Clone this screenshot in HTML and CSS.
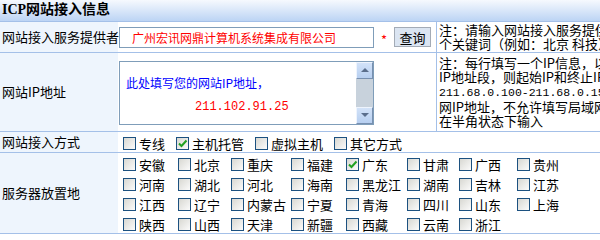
FILE: index.html
```html
<!DOCTYPE html>
<html lang="zh-CN">
<head>
    <meta charset="UTF-8">
    <title>ICP网站接入信息</title>
    <link rel="stylesheet" href="styles.css">
</head>
<body>
    <div class="panel">
        <div class="title">ICP网站接入信息</div>

        <div class="row row-provider">
            <div class="label">网站接入服务提供者</div>
            <div class="field">
                <div class="text-input">广州宏讯网鼎计算机系统集成有限公司</div>
                <span class="required">*</span>
                <button class="btn">查询</button>
            </div>
            <div class="note">
                <div>注：请输入网站接入服务提供者名称中的一</div>
                <div>个关键词（例如：北京 科技）进行查询</div>
            </div>
        </div>

        <div class="row row-ip">
            <div class="label">网站IP地址</div>
            <div class="field">
                <div class="textarea">
                    <div class="textarea-body">
                        <div class="hint">此处填写您的网站IP地址，</div>
                        <div class="ip">211.102.91.25</div>
                    </div>
                    <div class="scrollbar">
                        <div class="sb-btn"><span class="arrow up"></span></div>
                        <div class="sb-track"></div>
                        <div class="sb-btn"><span class="arrow down"></span></div>
                    </div>
                </div>
            </div>
            <div class="note">
                <div>注：每行填写一个IP信息，以回车分隔；如果是</div>
                <div>IP地址段，则起始IP和终止IP之间用“-”分隔</div>
                <div><span class="mono">211.68.0.100-211.68.0.150</span>；必须填写公</div>
                <div>网IP地址，不允许填写局域网IP地址；请</div>
                <div>在半角状态下输入</div>
            </div>
        </div>

        <div class="row row-mode">
            <div class="label">网站接入方式</div>
            <div class="field wide checks">
                <label class="ck"><span class="box"></span>专线</label>
                <label class="ck"><span class="box checked"><svg viewBox="0 0 11 11"><path d="M2 5.5 L4.5 8 L9.5 2.5"/></svg></span>主机托管</label>
                <label class="ck"><span class="box"></span>虚拟主机</label>
                <label class="ck"><span class="box"></span>其它方式</label>
            </div>
        </div>

        <div class="row row-area">
            <div class="label">服务器放置地</div>
            <div class="field wide">
                <div class="areas">
                    <label class="ck"><span class="box"></span>安徽</label>
                    <label class="ck"><span class="box"></span>北京</label>
                    <label class="ck"><span class="box"></span>重庆</label>
                    <label class="ck"><span class="box"></span>福建</label>
                    <label class="ck"><span class="box checked"><svg viewBox="0 0 11 11"><path d="M2 5.5 L4.5 8 L9.5 2.5"/></svg></span>广东</label>
                    <label class="ck"><span class="box"></span>甘肃</label>
                    <label class="ck"><span class="box"></span>广西</label>
                    <label class="ck"><span class="box"></span>贵州</label>

                    <label class="ck"><span class="box"></span>河南</label>
                    <label class="ck"><span class="box"></span>湖北</label>
                    <label class="ck"><span class="box"></span>河北</label>
                    <label class="ck"><span class="box"></span>海南</label>
                    <label class="ck"><span class="box"></span>黑龙江</label>
                    <label class="ck"><span class="box"></span>湖南</label>
                    <label class="ck"><span class="box"></span>吉林</label>
                    <label class="ck"><span class="box"></span>江苏</label>

                    <label class="ck"><span class="box"></span>江西</label>
                    <label class="ck"><span class="box"></span>辽宁</label>
                    <label class="ck"><span class="box"></span>内蒙古</label>
                    <label class="ck"><span class="box"></span>宁夏</label>
                    <label class="ck"><span class="box"></span>青海</label>
                    <label class="ck"><span class="box"></span>四川</label>
                    <label class="ck"><span class="box"></span>山东</label>
                    <label class="ck"><span class="box"></span>上海</label>

                    <label class="ck"><span class="box"></span>陕西</label>
                    <label class="ck"><span class="box"></span>山西</label>
                    <label class="ck"><span class="box"></span>天津</label>
                    <label class="ck"><span class="box"></span>新疆</label>
                    <label class="ck"><span class="box"></span>西藏</label>
                    <label class="ck"><span class="box"></span>云南</label>
                    <label class="ck"><span class="box"></span>浙江</label>
                </div>
            </div>
        </div>
    </div>
</body>
</html>
```

FILE: styles.css
```css
* {
    margin: 0;
    padding: 0;
    box-sizing: border-box;
}

body {
    font-family: "Noto Sans CJK SC", sans-serif;
    font-size: 13px;
    color: #000;
    background: #fff;
    width: 600px;
    overflow: hidden;
}

.panel {
    width: 600px;
    border-bottom: 1px solid #a4c0e8;
}

.title {
    height: 21px;
    line-height: 20px;
    padding-left: 2px;
    font-family: "Liberation Serif", "Noto Sans CJK SC", serif;
    font-size: 14px;
    font-weight: bold;
    background: linear-gradient(#f6f9fe, #bcd4f4);
}

.row {
    display: flex;
    border-top: 1px solid #a4c0e8;
}

.row-provider { height: 31px; }
.row-ip { height: 79px; }
.row-mode { height: 21px; }
.row-area { height: 81px; }

.label {
    width: 118px;
    flex-shrink: 0;
    background: #eef5fd;
    padding-left: 2px;
    display: flex;
    align-items: center;
    line-height: 14px;
    white-space: nowrap;
}

.field {
    width: 318px;
    flex-shrink: 0;
    display: flex;
    align-items: center;
    padding-left: 1px;
}

.field.wide {
    flex: 1;
    width: auto;
    padding-left: 5px;
}

.note {
    flex: 1;
    border-left: 1px solid #a4c0e8;
    padding-left: 2px;
    display: flex;
    flex-direction: column;
    justify-content: center;
    line-height: 14px;
    white-space: nowrap;
    overflow: hidden;
}

.note .mono {
    font-family: "Liberation Mono", monospace;
    font-size: 11.5px;
}

/* provider search */
.text-input {
    width: 255px;
    height: 21px;
    border: 1px solid #7f9db9;
    padding-left: 12px;
    font-size: 12px;
    line-height: 19px;
    color: #ff0000;
    white-space: nowrap;
    overflow: hidden;
}

.required {
    color: #ff0000;
    margin-left: 7px;
    margin-top: 5px;
    font-size: 13px;
}

.btn {
    margin-left: 7px;
    width: 37px;
    height: 20px;
    border: 1px solid #a3abb6;
    background: #dbe5f2;
    font-family: inherit;
    font-size: 13px;
    line-height: 17px;
    color: #000;
}

/* ip textarea */
.textarea {
    width: 255px;
    height: 64px;
    border: 1px solid #7f9db9;
    display: flex;
    margin-top: 1px;
}

.textarea-body {
    flex: 1;
    padding: 13px 0 0 6px;
    font-size: 12px;
    line-height: 16px;
}

.hint {
    color: #0000ff;
}

.ip {
    color: #ff0000;
    margin-top: 8px;
    padding-left: 69px;
    font-family: "Liberation Mono", monospace;
}

.scrollbar {
    width: 17px;
    display: flex;
    flex-direction: column;
    background: #c8d2dc;
}

.sb-btn {
    height: 17px;
    background: linear-gradient(#d2e2f8, #b7cff0);
    border-top: 1px solid #eef4fd;
    border-left: 1px solid #eef4fd;
    border-right: 1px solid #7890b0;
    border-bottom: 1px solid #7890b0;
    display: flex;
    align-items: center;
    justify-content: center;
}

.sb-track {
    flex: 1;
}

.arrow {
    width: 0;
    height: 0;
    border-left: 4px solid transparent;
    border-right: 4px solid transparent;
}

.arrow.up { border-bottom: 4px solid #5a6e8c; }
.arrow.down { border-top: 4px solid #5a6e8c; }

/* checkboxes */
.checks {
    gap: 11px;
    padding-top: 3px;
}

.ck {
    display: flex;
    align-items: center;
    gap: 3px;
    white-space: nowrap;
    line-height: 14px;
}

.box {
    width: 13px;
    height: 13px;
    flex-shrink: 0;
    border: 1px solid #1c5180;
    background: linear-gradient(135deg, #d8d8d2, #fbfbfb);
    display: flex;
    align-items: center;
    justify-content: center;
}

.box svg {
    width: 11px;
    height: 11px;
    fill: none;
    stroke: #21a121;
    stroke-width: 2;
}

.areas {
    display: grid;
    grid-template-columns: 55px 53px 60px 55px 61px 52px 58px auto;
    grid-auto-rows: 20px;
    align-self: stretch;
}

.areas .ck {
    padding-top: 3px;
}
```
